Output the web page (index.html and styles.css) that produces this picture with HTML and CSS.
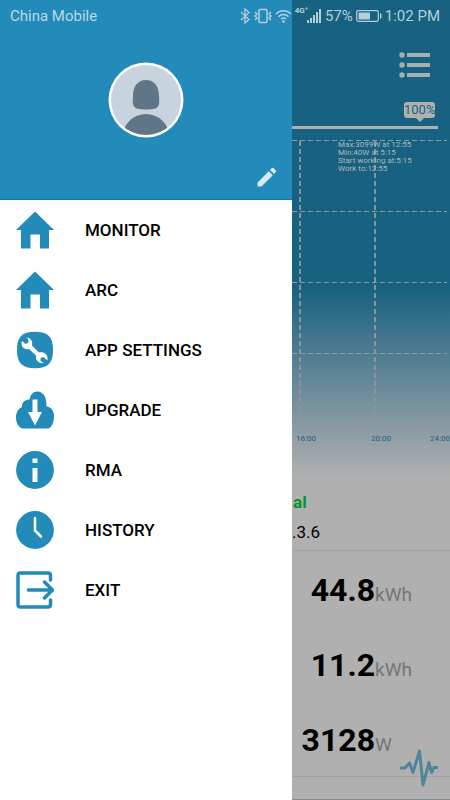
FILE: index.html
```html
<!DOCTYPE html>
<html lang="en">
<head>
    <title>Monitor</title>
    <meta charset="UTF-8">
    <meta name="viewport" content="width=device-width, initial-scale=1">
    <link rel="stylesheet" href="styles.css">
</head>
<body>
    <header class="status-bar">
        <span class="carrier">China Mobile</span>
        <div class="status-icons">
            <svg width="11" height="16" viewBox="0 0 11 16"><path d="M1 4l8 7.5-4 3.5V1l4 3.500L1 12" fill="none" stroke="currentColor" stroke-width="1.3"/></svg>
            <svg width="18" height="16" viewBox="0 0 18 16">
                <rect x="5" y="1.5" width="8" height="13" rx="1" fill="none" stroke="currentColor" stroke-width="1.5"/>
                <path d="M1 4l2 2-2 2 2 2-2 2M17 4l-2 2 2 2-2 2 2 2" fill="none" stroke="currentColor" stroke-width="1.5"/>
            </svg>
            <svg width="17" height="14" viewBox="0 0 17 14">
                <path d="M1 5a10.5 10.5 0 0 1 15 0M3.5 7.7a7 7 0 0 1 10 0M6 10a3.8 3.8 0 0 1 5 0" fill="none" stroke="currentColor" stroke-width="1.5"/>
                <circle cx="8.5" cy="12.5" r="1.3" fill="currentColor"/>
            </svg>
            <span class="network">4G⁺</span>
            <svg class="signal" width="15" height="14" viewBox="0 0 15 14"><path d="M0 11h2v3H0zM3 9h2v5H3zM6 6h2v8H6zM9 3h2v11H9zM12 0h2v14h-2z" fill="currentColor"/></svg>
            <span>57%</span>
            <svg width="26" height="14" viewBox="0 0 26 14">
                <rect x=".7" y="1.7" width="21.6" height="10.6" rx="1.5" fill="none" stroke="currentColor" stroke-width="1.2"/>
                <path d="M2.5 3.5H14v7H2.5zM24 4.5h1.5v5H24z" fill="currentColor"/>
            </svg>
            <span>1:02 PM</span>
        </div>
    </header>

    <aside class="drawer">
        <div class="profile">
            <svg width="76" height="76" viewBox="0 0 76 76">
                <defs><clipPath id="face"><circle cx="38" cy="38" r="35"/></clipPath></defs>
                <circle cx="38" cy="38" r="37.5" fill="#fff"/>
                <circle cx="38" cy="38" r="35" fill="#c8d4dd"/>
                <path d="M38 18c8 0 13 6 13 16 0 3 .6 6 0 8-1 5-6 5.500-13 5.500S26 47 25 42c-.6-2 0-5 0-8 0-10 5-16 13-16z" fill="#607585"/>
                <ellipse cx="38" cy="74" rx="23" ry="22" fill="#607585" clip-path="url(#face)"/>
            </svg>
            <button class="edit" aria-label="Edit profile">
                <svg width="20" height="20" viewBox="0 0 20 20"><path d="M.5 15.5v4h4L15.8 8.2l-4-4zM18.900 5.100a1.200 1.200 0 0 0 0-1.600L16.500 1.100a1.200 1.200 0 0 0-1.600 0L13 3l4 4z" fill="#d7e9f2"/></svg>
            </button>
        </div>
        <nav class="menu">
            <a class="menu-item" href="#monitor">
                <svg viewBox="0 0 38 38"><path d="M19 .5L38 19h-5v18.5h-9V23.500h-9.500v14H5V19H0z"/></svg>
                MONITOR
            </a>
            <a class="menu-item" href="#arc">
                <svg viewBox="0 0 38 38"><path d="M19 .5L38 19h-5v18.5h-9V23.500h-9.500v14H5V19H0z"/></svg>
                ARC
            </a>
            <a class="menu-item" href="#settings">
                <svg viewBox="0 0 38 38">
                    <path d="M19 .8c13 0 18 5 18 18.200s-5 18.200-18 18.200S1 32 1 19 6 .8 19 .8z"/>
                    <path class="cut" d="M11 6.500c4 .5 6 4 5 8l7 7c4-1 8 1 8.500 5 .2 1 0 2-.3 3L27.500 26l-3 1 .2 3 3 2c-5 1-8.500-3-7.700-7.500l-7-6.500c-4 1-7.500-1.500-7.500-6 0-.8.2-1.500.5-2L9.500 13l2.700-1.200.2-2.800z"/>
                </svg>
                APP SETTINGS
            </a>
            <a class="menu-item" href="#upgrade">
                <svg viewBox="0 0 38 38">
                    <path d="M6 37.500C2 36 0 31 0 26.500 0 21 2.500 17.500 6 16c-.5-4 3-8 7.500-7.500C14.500 3.500 17 .5 21.500.5 27.500.5 31 7 30.500 15.500c4.500.5 7.500 4 7.500 9.500 0 5-1 9.500-5 12.500z"/>
                    <path class="cut" d="M16.500 8.500h5v12.500H26L19 34.500 12 21h4.500z"/>
                </svg>
                UPGRADE
            </a>
            <a class="menu-item" href="#rma">
                <svg viewBox="0 0 38 38">
                    <circle cx="19" cy="19" r="18.900"/>
                    <path class="cut" d="M16.500 7.500h5V12h-5zM16.500 17h5v14h-5z"/>
                </svg>
                RMA
            </a>
            <a class="menu-item" href="#history">
                <svg viewBox="0 0 38 38">
                    <circle cx="19" cy="19" r="18.900"/>
                    <path class="hands" d="M19 7v12.500l6 6"/>
                </svg>
                HISTORY
            </a>
            <a class="menu-item" href="#exit">
                <svg viewBox="0 0 38 38">
                    <path class="outline" d="M34.500 9V4.500q0-2.500-2.500-2.500H4.500Q2 2 2 4.500v29Q2 36 4.500 36H32q2.500 0 2.500-2.500V29"/>
                    <path class="outline arrow" d="M12.500 19H36M28.500 11l8 8-8 8"/>
                </svg>
                EXIT
            </a>
        </nav>
    </aside>

    <main class="monitor">
        <section class="power">
            <div class="toolbar">
                <button aria-label="List">
                    <svg width="32" height="26" viewBox="0 0 32 26" fill="#a5b0b5">
                        <circle cx="3" cy="3" r="2.700"/><circle cx="3" cy="13" r="2.700"/><circle cx="3" cy="23" r="2.700"/>
                        <path d="M8 1h23v4H8zM8 11h23v4H8zM8 21h23v4H8z"/>
                    </svg>
                </button>
            </div>
            <div class="level">
                <span class="level-badge">100%</span>
                <div class="level-track"></div>
            </div>
            <div class="chart">
                <svg class="chart-grid" width="100%" height="300">
                    <path d="M0 8.500H155M0 79.500H155M0 150.500H155M0 221.500H155"/>
                    <path class="vertical" d="M8 9V291M83 9V291"/>
                    <path class="base" d="M0 292.500H155"/>
                </svg>
                <p class="chart-note">Max:3099W at 12:55<br>Min:40W at 5:15<br>Start working at:5:15<br>Work to:12:55</p>
            </div>
            <div class="axis">
                <span>16:00</span>
                <span>20:00</span>
                <span>24:00</span>
            </div>
        </section>

        <section class="device">
            <p class="state">al</p>
            <p class="version">.3.6</p>
        </section>

        <section class="totals">
            <div class="total"><strong>44.8</strong><span>kWh</span></div>
            <div class="total"><strong>11.2</strong><span>kWh</span></div>
            <div class="total"><strong>3128</strong><span>W</span></div>
        </section>
        <button class="pulse" aria-label="Activity">
            <svg width="38" height="38" viewBox="0 0 38 38"><path d="M0 19h5l4.500-5 3.500 9.500L19.500 2l3.500 34 6-22.500 2.500 10 2.500-5H38" fill="none" stroke="#51859c" stroke-width="3" stroke-linejoin="round"/></svg>
        </button>
    </main>
</body>
</html>
```

FILE: styles.css
```css
* {
    box-sizing: border-box;
}
body {
    margin: 0;
    min-height: 100vh;
    display: flex;
    position: relative;
    overflow-x: hidden;
    font-family: Roboto, "Liberation Sans", sans-serif;
    color: #000;
    background: #b0b0b0;
}
p {
    margin: 0;
}
button {
    padding: 0;
    border: 0;
    background: none;
    cursor: pointer;
}
svg {
    display: block;
    flex: none;
}

/* status bar lies over both the drawer and the page */
.status-bar {
    position: absolute;
    top: 0;
    left: 0;
    right: 0;
    z-index: 2;
    height: 32px;
    padding: 0 10px;
    display: flex;
    align-items: center;
    justify-content: space-between;
    color: #b9d9e8;
    font-size: 15px;
}
.status-icons {
    display: flex;
    align-items: center;
    gap: 3px;
    color: #b5cfda;
}
.network {
    align-self: flex-start;
    font-size: 8px;
    font-weight: bold;
    line-height: 8px;
}
.signal {
    margin-left: -4px;
}

.drawer {
    flex: 0 0 64.9%;
    z-index: 1;
    background: #fff;
}
.profile {
    height: 200px;
    padding: 62px 15px 12px;
    display: flex;
    flex-direction: column;
    align-items: center;
    justify-content: space-between;
    background: #228bba;
    border-bottom: 1px solid #0c74a8;
}
.edit {
    align-self: flex-end;
}
.menu-item {
    height: 60px;
    padding-left: 16px;
    display: flex;
    align-items: center;
    gap: 31px;
    color: #000;
    font-size: 17px;
    font-weight: 500;
    text-decoration: none;
}
.menu-item svg {
    width: 38px;
    height: 38px;
    fill: #228bba;
}
.menu-item .cut {
    fill: #fff;
}
.menu-item .hands {
    fill: none;
    stroke: #fff;
    stroke-width: 2.5;
    stroke-linecap: round;
}
.menu-item .outline {
    fill: none;
    stroke: #228bba;
    stroke-width: 3.5;
    stroke-linecap: round;
}
.menu-item .arrow {
    stroke-linejoin: round;
}

.monitor {
    flex: 1;
    min-width: 0;
    position: relative;
    overflow: hidden;
    border-bottom: 1px solid #7d8d96;
}
.power {
    height: 480px;
    padding-top: 52px;
    background: linear-gradient(#176181 286px, #8799a2 424px, #b0b0b0 478px);
}
.toolbar {
    height: 50px;
    padding-right: 19px;
    display: flex;
    justify-content: flex-end;
    align-items: flex-start;
}
.level {
    padding-right: 12px;
    display: flex;
    flex-direction: column;
    align-items: flex-end;
    gap: 8px;
}
.level-badge {
    position: relative;
    margin-right: 3px;
    width: 31px;
    border-radius: 3px;
    background: #b0b0b0;
    color: #176181;
    font-size: 13px;
    line-height: 16px;
    text-align: center;
}
.level-badge::after {
    content: "";
    position: absolute;
    top: 100%;
    left: 12px;
    border: 4px solid transparent;
    border-top-color: #b0b0b0;
}
.level-track {
    width: 100%;
    height: 3px;
    background: #b0b0b0;
}
.chart {
    position: relative;
    margin-top: 3px;
}
.chart-grid {
    fill: none;
    stroke: #929da1;
    stroke-dasharray: 5 3;
}
.chart-grid .vertical {
    stroke: #8b9498;
    stroke-width: 2;
}
.chart-grid .base {
    stroke: #9b938e;
}
.chart-note {
    position: absolute;
    top: 9px;
    left: 46px;
    color: #b0b8bb;
    font-size: 8px;
    line-height: 8px;
    white-space: nowrap;
}
.axis {
    padding: 2px 0 0 4px;
    display: grid;
    grid-template-columns: 75px 1fr auto;
    color: #176181;
    font-size: 8px;
    line-height: 10px;
}
.device {
    height: 71px;
    padding-top: 12px;
    border-bottom: 1px solid #a2a2a2;
    line-height: 20px;
}
.state {
    padding-left: 1px;
    color: #009333;
    font-size: 17px;
    font-weight: bold;
}
.version {
    margin-top: 10px;
    font-size: 17px;
}
.totals {
    height: 226px;
    padding-top: 2px;
    border-bottom: 1px solid #a2a2a2;
}
.total {
    height: 75px;
    display: grid;
    grid-template-columns: 83px 1fr;
    align-items: baseline;
    line-height: 75px;
}
.total strong {
    font-size: 32px;
    text-align: right;
}
.total span {
    color: #757575;
    font-size: 19px;
}
/* floating button */
.pulse {
    position: absolute;
    right: 12px;
    bottom: 12px;
}
```
